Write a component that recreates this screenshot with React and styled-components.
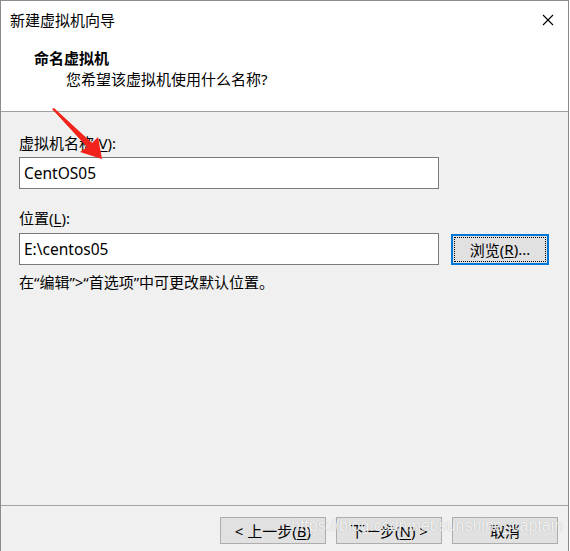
import React from "react";
import styled, { createGlobalStyle } from "styled-components";

const GlobalStyle = createGlobalStyle`
  html, body {
    margin: 0;
    padding: 0;
    background: #ffffff;
  }
  body {
    font-family: "Noto Sans", "Noto Sans CJK SC", sans-serif;
    font-size: 15px;
    color: #000000;
  }
`;

const Window = styled.div`
  position: relative;
  box-sizing: border-box;
  width: 569px;
  height: 551px;
  display: flex;
  flex-direction: column;
  border-top: 1px solid #8c8c8c;
  border-left: 1px solid #8c8c8c;
  border-right: 1px solid #8c8c8c;
  background: #f0f0f0;
  overflow: hidden;
`;

const Header = styled.div`
  background: #ffffff;
  height: 110px;
  border-bottom: 1px solid #a0a0a0;
  box-sizing: content-box;
`;

const TitleBar = styled.div`
  height: 38px;
  display: flex;
  align-items: center;
  justify-content: space-between;
  padding: 0 14px 0 9px;
`;

const Title = styled.div`
  font-size: 15px;
  line-height: 21px;
`;

const CloseIcon = styled.svg`
  width: 12px;
  height: 12px;
  display: block;
`;

const HeadTitle = styled.div`
  margin-top: 9px;
  padding-left: 33px;
  font-weight: bold;
  line-height: 21px;
`;

const HeadSub = styled.div`
  padding-left: 65px;
  line-height: 21px;
`;

const Body = styled.div`
  flex: 1;
  padding: 21px 0 0 18px;
`;

const Label = styled.div`
  line-height: 21px;
  margin-top: ${p => p.$gap || 0}px;
`;

const Key = styled.span`
  text-decoration: underline;
  text-underline-offset: 2px;
`;

const Row = styled.div`
  display: flex;
  align-items: center;
  gap: 12px;
  margin-top: ${p => p.$gap || 0}px;
`;

const TextBox = styled.div`
  box-sizing: border-box;
  width: 420px;
  height: 32px;
  border: 1px solid #7a7a7a;
  background: #ffffff;
  display: flex;
  align-items: center;
  padding-left: 4px;
  font-size: 15.5px;
`;

const Button = styled.button`
  box-sizing: border-box;
  width: ${p => p.$w || 106}px;
  height: ${p => p.$h || 27}px;
  padding: 0;
  font-family: "Noto Sans", "Noto Sans CJK SC", sans-serif;
  font-size: 15px;
  color: #000000;
  background: #e1e1e1;
  border: ${p => (p.$focus ? "2px solid #0078d7" : "1px solid #adadad")};
  display: flex;
  align-items: center;
  justify-content: center;
  position: relative;
`;

const FocusRing = styled.span`
  position: absolute;
  inset: 1px;
  border: 1px dotted #000000;
  pointer-events: none;
`;

const Hint = styled.div`
  margin-top: 7px;
  line-height: 21px;
`;

const Footer = styled.div`
  height: 46px;
  border-top: 1px solid #a0a0a0;
  display: flex;
  justify-content: flex-end;
  align-items: flex-start;
  gap: 10px;
  padding: 11px 10px 0 0;
  box-sizing: border-box;
`;

const Arrow = styled.svg`
  position: absolute;
  left: 0;
  top: 0;
  width: 120px;
  height: 170px;
  pointer-events: none;
`;

const Watermark = styled.div`
  position: absolute;
  left: 290px;
  top: 516px;
  font-family: "Liberation Sans", Arial, sans-serif;
  font-size: 16px;
  color: rgba(255, 255, 255, 0.85);
  text-shadow: 0 0 1px rgba(90, 90, 90, 0.45);
  white-space: nowrap;
  pointer-events: none;
`;

const App = () => {
  return (
    <>
      <GlobalStyle />
      <Window>
        <Header>
          <TitleBar>
            <Title>新建虚拟机向导</Title>
            <CloseIcon viewBox="0 0 12 12">
              <path d="M1 1 L11 11 M11 1 L1 11" stroke="#000" strokeWidth="1.1" fill="none" />
            </CloseIcon>
          </TitleBar>
          <HeadTitle>命名虚拟机</HeadTitle>
          <HeadSub>您希望该虚拟机使用什么名称?</HeadSub>
        </Header>
        <Body>
          <Label>
            虚拟机名称(<Key>V</Key>):
          </Label>
          <Row $gap={3}>
            <TextBox>CentOS05</TextBox>
          </Row>
          <Label $gap={19}>
            位置(<Key>L</Key>):
          </Label>
          <Row $gap={4}>
            <TextBox>E:\centos05</TextBox>
            <Button $w={98} $h={31} $focus>
              <FocusRing />
              浏览(<Key>R</Key>)...
            </Button>
          </Row>
          <Hint>在“编辑”&gt;“首选项”中可更改默认位置。</Hint>
        </Body>
        <Footer>
          <Button>
            &lt; 上一步(<Key>B</Key>)
          </Button>
          <Button>
            下一步(<Key>N</Key>) &gt;
          </Button>
          <Button>取消</Button>
        </Footer>
        <Arrow viewBox="0 0 120 170">
          <polygon
            points="51,108 53,107 91,142 97,136 101,158 79,151 86,146"
            fill="#f2231a"
          />
        </Arrow>
        <Watermark>https://blog.csdn.net/sunshine_captain</Watermark>
      </Window>
    </>
  );
};

export default App;
